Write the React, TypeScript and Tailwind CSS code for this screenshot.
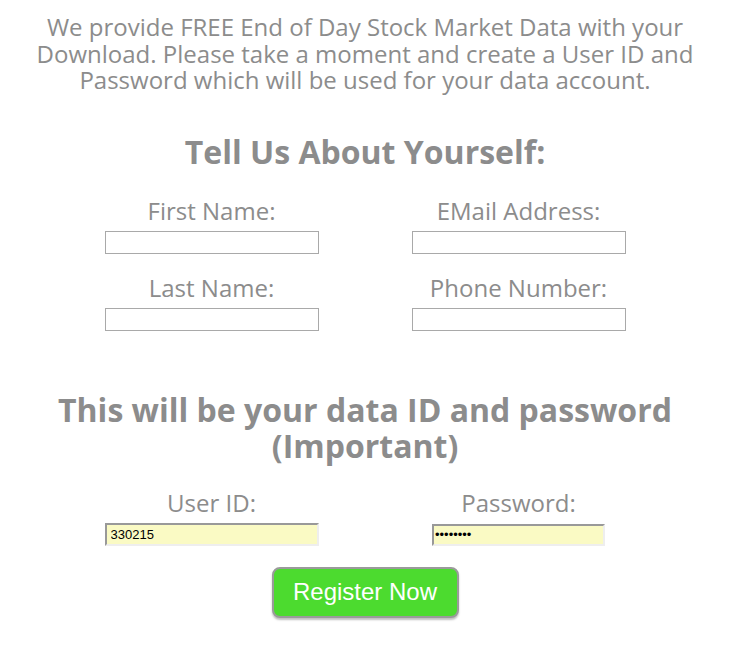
import React from "react";

const Field = ({ label }: { label: string }) => (
  <div className="flex flex-col items-center">
    <label className="text-[24px] leading-[28px] text-[#8c8c8c]">{label}</label>
    <input
      type="text"
      className="mt-[6px] w-[214px] h-[23px] border border-[#a9a9a9] bg-white"
    />
  </div>
);

export default function App() {
  return (
    <div className="min-h-[666px] w-[730px] bg-white font-['Open_Sans',sans-serif] text-[#8c8c8c]">
      <p className="px-[30px] pt-[14px] text-center text-[24px] leading-[26.5px]">
        We provide FREE End of Day Stock Market Data with your Download. Please take a moment and create a User ID and
        Password which will be used for your data account.
      </p>

      <h2 className="mt-[40px] text-center text-[32px] font-bold leading-[36px]">Tell Us About Yourself:</h2>

      <div className="mx-auto mt-[27px] grid w-[614px] grid-cols-2 gap-y-[20px]">
        <Field label="First Name:" />
        <Field label="EMail Address:" />
        <Field label="Last Name:" />
        <Field label="Phone Number:" />
      </div>

      <h2 className="mt-[61px] text-center text-[32px] font-bold leading-[36px]">
        This will be your data ID and password
        <br />
        (Important)
      </h2>

      <div className="mx-auto mt-[25px] grid w-[614px] grid-cols-2">
        <div className="flex flex-col items-center">
          <label className="text-[24px] leading-[28px]">User ID:</label>
          <input
            type="text"
            defaultValue="330215"
            className="mt-[6px] h-[23px] w-[214px] border-2 border-t-[#999] border-l-[#999] border-r-[#eee] border-b-[#eee] bg-[#fafac4] px-[4px] font-['Liberation_Sans',sans-serif] text-[13px] text-black outline-none"
          />
        </div>
        <div className="flex flex-col items-center">
          <label className="text-[24px] leading-[28px]">Password:</label>
          <input
            type="password"
            defaultValue="12345678"
            className="mt-[7px] h-[22px] w-[173px] border-2 border-t-[#999] border-l-[#999] border-r-[#eee] border-b-[#eee] bg-[#fafac4] px-[1px] font-['Liberation_Sans',sans-serif] text-[13px] text-black outline-none"
          />
        </div>
      </div>

      <div className="mt-[21px] flex justify-center">
        <button className="h-[51px] w-[187px] rounded-[8px] border-2 border-[#9a9a9a] bg-[#4cdb2f] font-['Liberation_Sans',sans-serif] text-[24px] text-white shadow-[0_2px_2px_rgba(0,0,0,0.25)]">
          Register Now
        </button>
      </div>
    </div>
  );
}
